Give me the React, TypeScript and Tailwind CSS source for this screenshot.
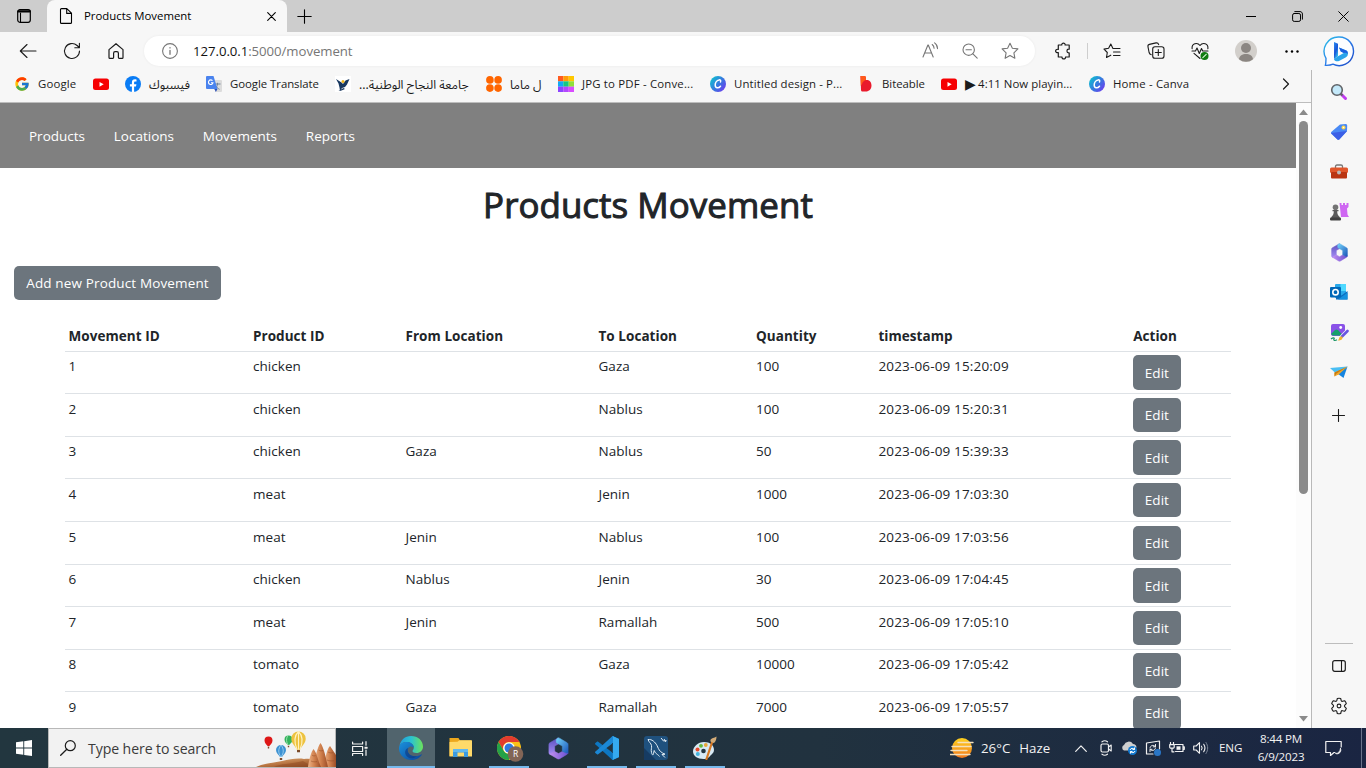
import type { ReactNode } from "react";
import { FcGoogle } from "react-icons/fc";

type IconProps = { className?: string; box?: string; children: ReactNode };

function Line({ className = "size-5", box = "0 0 20 20", children }: IconProps) {
  return (
    <svg className={className} viewBox={box} fill="none" stroke="currentColor" strokeLinecap="round" strokeLinejoin="round">
      {children}
    </svg>
  );
}

function Art({ className = "size-4", box = "0 0 16 16", children }: IconProps) {
  return (
    <svg className={className} viewBox={box}>
      {children}
    </svg>
  );
}

function Slot({ className, children }: { className: string; children?: ReactNode }) {
  return <div className={`flex h-full shrink-0 items-center justify-center ${className}`}>{children}</div>;
}

/* ---------- Title bar ---------- */

function TitleBar() {
  return (
    <div className="flex h-8 shrink-0 items-stretch bg-[#cdcdcd] text-black">
      <Slot className="w-[47px]">
        <Line className="size-4" box="0 0 16 16">
          <rect x="1.7" y="1.7" width="12.6" height="12.6" rx="2.2" strokeWidth="1.2" />
          <path d="M2.3 3.4h11.4" strokeWidth="2.2" />
          <path d="M4.5 5v9" strokeWidth="1.1" />
        </Line>
      </Slot>
      <div className="flex w-60 items-center rounded-t-lg bg-[#f7f7f7] pr-[11px] pl-3">
        <Line className="h-4 w-[14px]" box="0 0 14 16">
          <path d="M2.5 .6h5.3l4.7 4.6v9.2c0 .6-.4 1-1 1h-9c-.6 0-1-.4-1-1V1.6c0-.6.4-1 1-1zM7.7.8v4.6h4.6" strokeWidth="1.1" />
        </Line>
        <span className="ml-[11px] flex-1 text-[11.4px]">Products Movement</span>
        <Line className="size-[9px]" box="0 0 9 9">
          <path d="M.7.7l7.6 7.6M8.3.7L.7 8.3" strokeWidth="1.1" />
        </Line>
      </div>
      <Slot className="w-[35px]">
        <Line className="size-[15px]" box="0 0 15 15">
          <path d="M7.5.8v13.4M.8 7.5h13.4" strokeWidth="1.1" />
        </Line>
      </Slot>
      <div className="flex-1" />
      <Slot className="w-[46px]">
        <Line className="size-[10px]" box="0 0 10 10"><path d="M0 5.5h10" /></Line>
      </Slot>
      <Slot className="w-[46px]">
        <Line className="size-[11px]" box="0 0 11 11">
          <rect x=".6" y="2.5" width="7.9" height="7.9" rx="1.6" />
          <path d="M2.8.6h5.2c1.4 0 2.4 1 2.4 2.4v5.2" />
        </Line>
      </Slot>
      <Slot className="w-[46px]">
        <Line className="size-[11px]" box="0 0 11 11"><path d="M.7.7l9.6 9.6M10.3.7L.7 10.3" /></Line>
      </Slot>
    </div>
  );
}

/* ---------- Toolbar ---------- */

function BingLogo() {
  return (
    <svg className="h-[34px] w-[34px]" viewBox="0 0 34 34">
      <defs>
        <linearGradient id="ring" x1="0" y1="0" x2="1" y2="1">
          <stop offset="0" stopColor="#2bc3e8" />
          <stop offset=".5" stopColor="#2b7de9" />
          <stop offset="1" stopColor="#1b45c4" />
        </linearGradient>
        <linearGradient id="bee" x1="0" y1="0" x2=".6" y2="1">
          <stop offset="0" stopColor="#2b8cf0" />
          <stop offset=".6" stopColor="#1a55d8" />
          <stop offset="1" stopColor="#32c0ee" />
        </linearGradient>
      </defs>
      <path d="M17 3a14.3 14.3 0 1 1-6 27.2c-2.2 1.1-4.7 1.3-7.6 1.2.5-2.3.5-4.2.6-7A14.3 14.3 0 0 1 17 3z" fill="#fdfdff" stroke="url(#ring)" strokeWidth="1.4" />
      <path d="M12 8l4 1.7v12.6l-4 2.7z" fill="url(#bee)" />
      <path d="M12 25l4-2.8 5.8-3.3-3-1.4-1.7-4 7.3 3c1.3.6 1.5 2 1.5 3.3 0 1.8-.8 2.9-2.3 3.8L17 27c-2 .9-5-.1-5-2z" fill="#2aa4ea" />
      <path d="M17 13.5l7.2 3c1.3.6 1.7 2 1.6 3.6-1.2-1.5-2.7-1.3-4-1.2l-3-1.4z" fill="#1c5fe0" />
    </svg>
  );
}

function Toolbar() {
  return (
    <div className="flex h-[38px] shrink-0 items-center bg-[#f7f7f7] pl-[6px] text-[#1b1b1b]">
      <Slot className="w-11">
        <Line><path d="M18 10H2.5M9 3.5L2.3 10 9 16.5" strokeWidth="1.1" /></Line>
      </Slot>
      <Slot className="w-11">
        <Line><path d="M17.5 10a7.5 7.5 0 1 1-2.4-5.5L17.3 6.5M17.4 2.2v4.5h-4.6" strokeWidth="1.1" /></Line>
      </Slot>
      <Slot className="w-11">
        <Line>
          <path d="M3 8.6L10 2.7l7 5.9v7.9c0 .6-.3.9-.9.9h-2.9c-.5 0-.8-.3-.8-.8v-4.4c0-1-.7-1.6-1.5-1.6H9.1c-.9 0-1.5.7-1.5 1.6v4.4c0 .5-.3.8-.8.8H3.9c-.6 0-.9-.3-.9-.9z" strokeWidth="1.2" />
        </Line>
      </Slot>
      <div className="ml-[6px] flex h-[30px] w-[891px] items-center rounded-full bg-white pr-[5px] pl-[17px] text-[#767676] shadow-[0_0_3px_rgba(0,0,0,0.06)]">
        <Line className="size-[18px]" box="0 0 18 18">
          <circle cx="9" cy="9" r="7.4" strokeWidth="1.1" />
          <path d="M9 8.3v4M9 5.6v.3" strokeWidth="1.3" />
        </Line>
        <span className="ml-[14px] flex-1 pt-px text-[13.2px] tracking-[-0.05px]">
          <span className="text-[#111]">127.0.0.1</span>:5000/movement
        </span>
        <Slot className="w-10">
          <Line>
            <path d="M3 16L7.9 4h.4l4.9 12M4.7 12h6.7M12.2 3.5c1.2.9 1.8 2.2 1.9 3.7M14.6 1.9c1.9 1.3 2.9 3.4 2.9 5.7" strokeWidth="1.1" />
          </Line>
        </Slot>
        <Slot className="w-10">
          <Line>
            <circle cx="8.7" cy="8.7" r="5.7" strokeWidth="1.1" />
            <path d="M6 8.7h5.4M12.9 12.9l4.3 4.3" strokeWidth="1.1" />
          </Line>
        </Slot>
        <Slot className="w-10">
          <Line>
            <path d="M10 2.2l2.4 5 5.5.7-4 3.9 1 5.5-4.9-2.7-4.9 2.7 1-5.5-4-3.9 5.5-.7z" strokeWidth="1.1" />
          </Line>
        </Slot>
      </div>
      <Slot className="ml-[6px] w-11">
        <Line className="size-[18px]" box="0 0 18 18">
          <path d="M4.3 3h3.5c-.4-2.400 3.700-2.400 3.300 0h4.100v4.200h-.6c-2.200 0-2.200 3.700 0 3.700h.6V15h-3.700c.5 2.600-3.900 2.600-3.500 0H4.300v-4.400c-3.600.6-3.600-3.900 0-3.300z" strokeWidth="1.2" />
        </Line>
      </Slot>
      <div className="ml-[2px] h-4 w-px bg-[#cecece]" />
      <Slot className="ml-[2px] w-11">
        <Line>
          <path d="M10.8 7.3L8.8 3 6.6 7.3l-4.6.8 3.3 3.4-.8 5 4.3-2.3M11 7.500h7M11.500 11h6.500M11.500 14.500h6.500" strokeWidth="1.1" />
        </Line>
      </Slot>
      <Slot className="w-11">
        <Line>
          <path d="M5.300 13.700c-1.500-.2-1.900-1.100-2.200-2.200L2 5.800c-.3-1.300.3-2.100 1.400-2.400l6.600-1.500c1.400-.3 2.200.2 2.700 1.700" strokeWidth="1.1" />
          <rect x="6.7" y="5.700" width="11.3" height="11.6" rx="2.3" strokeWidth="1.1" />
          <path d="M12.300 8.500v6M9.300 11.500h6" strokeWidth="1.1" />
        </Line>
      </Slot>
      <Slot className="w-11">
        <Line>
          <path d="M2.100 7.700C1.500 2.200 7.400 1 10 4.500c2.600-3.500 8.500-2.300 7.900 3.200M2 10h3.500l1.500-3 2.300 5.500 2.200-5 1.200 2.500H18M4 12.300l6 5.200" strokeWidth="1.1" />
          <circle cx="14.5" cy="15" r="4" fill="#107c10" stroke="none" />
          <path d="M12.800 16.600l3.400-3.300" stroke="#dff6dd" strokeWidth="1.1" />
        </Line>
      </Slot>
      <Slot className="w-[47px]">
        <Art className="size-[22px]" box="0 0 22 22">
          <circle cx="11" cy="11" r="11" fill="#d2cfcb" />
          <circle cx="11" cy="8" r="5" fill="#8b8682" />
          <path d="M4 19.300c.3-7.200 13.700-7.200 14 0A11 11 0 0 1 4 19.300z" fill="#8b8682" />
        </Art>
      </Slot>
      <Slot className="w-[46px]">
        <Art className="h-[3px] w-[14px]" box="0 0 14 3">
          <circle cx="1.5" cy="1.5" r="1.2" /><circle cx="7" cy="1.5" r="1.2" /><circle cx="12.5" cy="1.5" r="1.2" />
        </Art>
      </Slot>
      <Slot className="ml-px w-[46px]"><BingLogo /></Slot>
    </div>
  );
}

/* ---------- Bookmarks ---------- */

function YouTube() {
  return (
    <Art>
      <rect y="2.5" width="16" height="11.5" rx="2.5" fill="#f60002" />
      <path d="M6.500 5.900l4.200 2.400-4.200 2.400z" fill="#fff" />
    </Art>
  );
}

function Canva({ id }: { id: string }) {
  return (
    <Art>
      <defs>
        <linearGradient id={id} x1="0" y1=".2" x2="1" y2="1">
          <stop offset="0" stopColor="#0fc0d0" /><stop offset=".5" stopColor="#3a74e0" /><stop offset="1" stopColor="#7b2ff2" />
        </linearGradient>
      </defs>
      <circle cx="8" cy="8" r="8" fill={`url(#${id})`} />
      <path d="M10.500 6c.6-1.400-.3-2.400-1.500-2.100C6.700 4.400 5.100 7 5.200 9.300c.1 3.200 3.400 3.300 5.300.9" fill="none" stroke="#fff" strokeWidth="1.5" strokeLinecap="round" />
    </Art>
  );
}

const rainbow = [
  ["#ff5a1f", "#ff9d0a", "#ffc800"],
  ["#12a8f5", "#14c784", "#8fe03a"],
  ["#8e44ff", "#b347ff", "#d94bff"],
];

const bookmarks: { width: string; label?: ReactNode; text?: string; icon: ReactNode }[] = [
  { width: "w-[79px]", label: "Google", text: "tracking-[0.15px]", icon: <FcGoogle className="size-4" /> },
  { width: "w-8", icon: <YouTube /> },
  {
    width: "w-[81px]", label: "فيسبوك",
    icon: (
      <Art>
        <circle cx="8" cy="8" r="8" fill="#0a7cf5" />
        <path d="M6.900 16v-5.500H4.900V8.200h2V6.500c0-2.200 1.100-3.300 3-3.300.7 0 1.200.1 1.600.2v2h-1.100c-1 0-1.300.5-1.300 1.300v1.500h2.300l-.4 2.300H9.100V16z" fill="#fff" />
      </Art>
    ),
  },
  {
    width: "w-[129px]", label: "Google Translate", text: "tracking-[-0.05px]",
    icon: (
      <Art>
        <path d="M6 4h9a1 1 0 0 1 1 1v10a1 1 0 0 1-1 1H9.500z" fill="#dcdcdc" />
        <path d="M8.500 8h6M11.500 6.800V8c0 2-1.500 4-3 5M9.500 9.500c1 2 2.500 3 4 3.800" fill="none" stroke="#70839a" />
        <path d="M1 0h6.500l4 13H1a1 1 0 0 1-1-1V1a1 1 0 0 1 1-1z" fill="#4a83ee" />
        <path d="M8.500 13h3L9.800 16z" fill="#2b50b8" />
        <path d="M6.500 4.700a2.300 2.300 0 1 0 .5 2H5" fill="none" stroke="#fff" strokeWidth="1.1" />
      </Art>
    ),
  },
  {
    width: "w-[151px]", label: "جامعة النجاح الوطنية...",
    icon: (
      <Art>
        <rect width="16" height="16" fill="#fff" />
        <path d="M1 3l5.500 3.500L8 8l2.500-3.500L14.500 3 12 8.500 10 11l-3 1-2 3-.5-3.500-1-4z" fill="#17375f" />
        <path d="M3.500 15l5-3 1.500 1-3.500 1.500z" fill="#17375f" />
        <circle cx="8" cy="5.600" r="1.500" fill="#eeb51b" />
      </Art>
    ),
  },
  {
    width: "w-[72px]", label: "ل ماما",
    icon: (
      <Art>
        <g fill="#ff6500">
          <circle cx="3.9" cy="3.9" r="3.8" /><circle cx="12.1" cy="3.9" r="3.8" />
          <circle cx="3.9" cy="12.1" r="3.8" /><circle cx="12.1" cy="12.1" r="3.8" />
        </g>
      </Art>
    ),
  },
  {
    width: "w-[152px]", label: "JPG to PDF - Conve...", text: "tracking-[0.18px]",
    icon: (
      <Art>
        {rainbow.map((row, y) => row.map((c, x) => <rect key={c} x={x * 5.33} y={y * 5.33} width="5.4" height="5.4" fill={c} />))}
      </Art>
    ),
  },
  { width: "w-[148px]", label: "Untitled design - P...", text: "tracking-[0.12px]", icon: <Canva id="canva1" /> },
  {
    width: "w-[83px]", label: "Biteable", text: "tracking-[-0.05px]",
    icon: (
      <Art>
        <path d="M2.500 0h4.600c.8 1 1 2.500.9 4 3.800-.5 5.500 2.400 5.500 5.500 0 3.800-2.400 6-5.700 6H4.500c-1 0-1.500-.6-1.500-1.500z" fill="#e91a2c" />
        <path d="M2.500 0h4.600c.8 1 1 2.500.9 4-2 .4-3.500 2-4 4L2.800 10z" fill="#ff5a1c" />
      </Art>
    ),
  },
  {
    width: "w-[148px]", text: "flex items-center tracking-[0.05px]", icon: <YouTube />,
    label: <><span className="mr-[2px] text-[14px] leading-4">▶</span>4:11 Now playin...</>,
  },
  { width: "w-[110px]", label: "Home - Canva", text: "tracking-[0.16px]", icon: <Canva id="canva2" /> },
];

function Bookmarks() {
  return (
    <div className="flex h-[33px] shrink-0 items-center border-b border-[#bdbdbd] bg-[#f7f7f7] pb-1 pl-[14px] text-[11.4px] text-[#1b1b1b]">
      {bookmarks.map((b, i) => (
        <div key={i} className={`flex h-5 shrink-0 items-center gap-2 whitespace-nowrap ${b.width}`}>
          <span className="shrink-0">{b.icon}</span>
          {b.label && (
            <span className={b.text ?? "pt-px font-['Noto_Sans_Arabic','DejaVu_Sans',sans-serif] text-[12.2px] leading-5"} dir={b.text ? "ltr" : "rtl"}>
              {b.label}
            </span>
          )}
        </div>
      ))}
      <Line className="ml-[83px] h-3 w-2" box="0 0 8 12"><path d="M1.5 1l5 5-5 5" strokeWidth="1.2" /></Line>
    </div>
  );
}

/* ---------- Page ---------- */

const columns = "grid grid-cols-[184.4px_152.5px_193px_157.5px_122.4px_254.8px_1fr]";
const headers = ["Movement ID", "Product ID", "From Location", "To Location", "Quantity", "timestamp", "Action"];
const rows = [
  ["1", "chicken", "", "Gaza", "100", "2023-06-09 15:20:09"],
  ["2", "chicken", "", "Nablus", "100", "2023-06-09 15:20:31"],
  ["3", "chicken", "Gaza", "Nablus", "50", "2023-06-09 15:39:33"],
  ["4", "meat", "", "Jenin", "1000", "2023-06-09 17:03:30"],
  ["5", "meat", "Jenin", "Nablus", "100", "2023-06-09 17:03:56"],
  ["6", "chicken", "Nablus", "Jenin", "30", "2023-06-09 17:04:45"],
  ["7", "meat", "Jenin", "Ramallah", "500", "2023-06-09 17:05:10"],
  ["8", "tomato", "", "Gaza", "10000", "2023-06-09 17:05:42"],
  ["9", "tomato", "Gaza", "Ramallah", "7000", "2023-06-09 17:05:57"],
];

function Page() {
  return (
    <div className="flex min-h-0 flex-1 bg-white text-[#212529]">
      <main className="flex w-[1296px] flex-col overflow-hidden text-[13.5px] tracking-[0.05px]">
        <nav className="flex h-[65px] shrink-0 items-center gap-[28.8px] bg-[#808080] pt-[2px] pl-[29px] tracking-normal text-white">
          <a>Products</a><a>Locations</a><a>Movements</a><a>Reports</a>
        </nav>
        <h1 className="mt-[14px] h-[46px] shrink-0 text-center text-[34.9px] leading-[46px] font-normal [-webkit-text-stroke:1px_#212529]">Products Movement</h1>
        <button className="mt-[38px] ml-[14px] h-[34px] w-[207px] shrink-0 rounded-[5px] bg-[#6c757d] tracking-[0.14px] text-white">Add new Product Movement</button>
        <div className="mt-[22px] ml-[65px] w-[1166px] shrink-0">
          <div className={`${columns} h-[29.55px] border-b border-[#dee2e6] font-bold`}>
            {headers.map((h) => <div key={h} className="pl-[3.6px] leading-[28px]">{h}</div>)}
          </div>
          {rows.map((r) => (
            <div key={r[0]} className={`${columns} h-[42.6px] border-b border-[#dee2e6]`}>
              {r.map((c, i) => <div key={i} className={`pt-[3.6px] pl-[3.6px] leading-[22px] ${i === 5 ? "tracking-[0.16px]" : ""}`}>{c}</div>)}
              <div className="pt-[3.6px] pl-[3.3px]">
                <button className="h-[34.4px] w-12 rounded-[5px] bg-[#6c757d] pt-[0.7px] text-white">Edit</button>
              </div>
            </div>
          ))}
        </div>
      </main>
      <div className="flex w-[15px] flex-col items-center bg-[#fcfcfc] pt-[6px] pb-[6px]">
        <svg className="h-[6px] w-[9px]" viewBox="0 0 9 6"><path d="M4.5 .5L9 6H0z" fill="#8b8b8b" /></svg>
        <div className="mt-[6px] h-[373px] w-[9px] rounded-full bg-[#8b8b8b]" />
        <div className="flex-1" />
        <svg className="h-[6px] w-[9px]" viewBox="0 0 9 6"><path d="M4.5 5.5L0 0h9z" fill="#8b8b8b" /></svg>
      </div>
    </div>
  );
}

/* ---------- Side bar ---------- */

function Hexagon({ id }: { id: string }) {
  return (
    <>
      <defs>
        <linearGradient id={`${id}a`} x1="0" y1="0" x2="0" y2="1"><stop offset="0" stopColor="#5a50bd" /><stop offset="1" stopColor="#a58cf4" /></linearGradient>
        <linearGradient id={`${id}b`} x1="0" y1="0" x2="1" y2="1"><stop offset="0" stopColor="#74d5fb" /><stop offset="1" stopColor="#1b55b8" /></linearGradient>
        <linearGradient id={`${id}c`} x1="0" y1="0" x2="1" y2="0"><stop offset="0" stopColor="#c18ff0" /><stop offset="1" stopColor="#6a50d0" /></linearGradient>
      </defs>
      <g strokeWidth=".6" strokeLinejoin="round">
        <path d="M12 .8L3 6c-.8.500-1 1-1 1.800v8.600c0 1 .5 1.600 1.300 1.900l4.700-3V9.500l6-3.500z" fill={`url(#${id}a)`} stroke={`url(#${id}a)`} />
        <path d="M3 18l7.800 4.600c.8.500 1.700.5 2.500 0L21 18c.6-.4.9-.9 1-1.500l-6-1.500-4 2.300L8 15z" fill={`url(#${id}c)`} stroke={`url(#${id}c)`} />
        <path d="M10.500 1.500c1-.7 2-.7 3 0L21 6c.7.500 1 1 1 1.800v8.700c-1 .5-2 .3-3-.2L16 14.800V9.500L10 6c-.5-1.800-.5-3.500.5-4.500z" fill={`url(#${id}b)`} stroke={`url(#${id}b)`} />
      </g>
    </>
  );
}

const apps: ReactNode[] = [
  <Art className="size-[18px]" box="0 0 18 18">
    <path d="M11.500 11.500l4 4" stroke="#c03cf0" strokeWidth="3" strokeLinecap="round" />
    <path d="M10.500 10.500l2 2" stroke="#5f5f66" strokeWidth="2" />
    <circle cx="7" cy="7" r="5.300" fill="#c4e9fa" stroke="#606468" strokeWidth="1.6" />
  </Art>,
  <Art className="size-[18px]" box="0 0 18 18">
    <path d="M10 1.500l5.500-.6c1 0 1.700.6 1.700 1.600L17 8.200l-7.500 8c-.7.700-1.600.7-2.300 0L1.500 11c-.7-.7-.7-1.600 0-2.300z" fill="#4a8af5" />
    <path d="M1 10L17 8l-7.500 8.200c-.7.700-1.600.7-2.300 0z" fill="#3c5fe6" /><circle cx="13.500" cy="4.500" r="2" fill="#ffd84b" /><circle cx="13.500" cy="4.500" r=".8" fill="#fff" />
  </Art>,
  <Art className="size-[18px]" box="0 0 18 18">
    <path d="M5.500 5V3.500c0-1 .5-1.500 1.500-1.500h4c1 0 1.500.5 1.500 1.500V5" fill="none" stroke="#777" strokeWidth="1.3" />
    <rect y="4.500" width="18" height="5.500" rx="1.500" fill="#e0562b" /><rect x="1" y="9" width="16" height="6.500" rx="1" fill="#ba3512" />
    <circle cx="9" cy="9.500" r="2" fill="#b9b9b9" />
  </Art>,
  <Art className="size-5" box="0 0 20 20">
    <path d="M10.500 1h2v2h1.500V1h2v2h1.500V1h2v4l-1.500 1.500.5 6 1.500 2.500H12z" fill="#cf68f2" />
    <circle cx="6.500" cy="5.200" r="2.800" fill="#747474" />
    <path d="M3.500 8h6v1.300H8.200c0 2.500.7 4.200 2.500 5.700v1H2.300v-1c1.800-1.500 2.500-3.200 2.500-5.700H3.500z" fill="#5b5b5b" /><rect x="1" y="15.500" width="11" height="3" rx="1" fill="#414141" />
  </Art>,
  <Art className="size-[19px]" box="0 0 24 24"><Hexagon id="sideHex" /></Art>,
  <Art className="size-[18px]" box="0 0 18 18">
    <rect x="5" y="1" width="11" height="14" rx="1" fill="#28a8ea" /><path d="M10.500 1H16v7h-5.500z" fill="#50d9ff" />
    <path d="M6 16.500V9l5.500 3.500L17.500 8v8.500z" fill="#0f6cbd" /><path d="M8 16.500l9.500-7v7z" fill="#1490df" />
    <rect y="4" width="11" height="10.500" rx="1" fill="#0068b8" /><circle cx="5.500" cy="9.200" r="2.700" fill="none" stroke="#fff" strokeWidth="1.600" />
  </Art>,
  <Art className="size-[19px]" box="0 0 19 19">
    <rect x="1" y="1" width="14" height="12" rx="2" fill="#8a52e8" /><circle cx="10.700" cy="4.500" r="1.400" fill="#fff" />
    <path d="M1 11l4-4c1-.8 2-.8 3 0l5 5.500H2.500z" fill="#16a06a" />
    <path d="M17.500 8L12 13.500" stroke="#f7f7f7" strokeWidth="4" strokeLinecap="round" />
    <path d="M17.500 8L12 13.500" stroke="#6856e0" strokeWidth="2.600" strokeLinecap="round" /><path d="M8 17.500c2 .2 5-.7 4.500-3.700-2-1-3.700.7-3.500 2z" fill="#f3b62a" />
    <path d="M1 16c2-1.700 4-1.500 3 0s1 2 3 .8" fill="none" stroke="#199565" strokeWidth="1.200" />
  </Art>,
  <Art className="size-[18px]" box="0 0 18 18">
    <path d="M0 5l17.500-1.500L6 10.500z" fill="#49bef3" /><path d="M17.500 3.500L13.500 15l-6-4.500z" fill="#1684df" />
    <path d="M17.500 3.500L4.500 9.500v4L9 11.200z" fill="#f0a72c" /><path d="M4.500 9.500L17.500 3.500 6.500 10.500 4.500 13.500z" fill="#c77b11" />
  </Art>,
];

function SideBar() {
  return (
    <aside className="flex w-[55px] shrink-0 flex-col items-center border-l border-[#b9b9b9] bg-[#f7f7f7] pt-[2px] text-[#1b1b1b]">
      {apps.map((a, i) => <div key={i} className="flex h-10 items-center justify-center">{a}</div>)}
      <div className="mt-px flex h-[45px] items-center pr-px">
        <Line className="size-[13px]" box="0 0 13 13"><path d="M6.5.5v12M.5 6.5h12" strokeWidth="1.1" /></Line>
      </div>
      <div className="flex-1" />
      <div className="h-px w-7 bg-[#bdbdbd]" />
      <div className="mt-[2px] flex h-10 items-center">
        <Line className="h-3 w-[14px]" box="0 0 14 12"><rect x=".7" y=".7" width="12.6" height="10.6" rx="2" strokeWidth="1.2" /><path d="M9.5 1v10" strokeWidth="1.1" /></Line>
      </div>
      <div className="mb-[2px] flex h-10 items-center">
        <Line className="size-[18px]" box="0 0 18 18">
          <path d="M7.300 1.500c1.100-.3 2.300-.3 3.400 0l.5 2.100c.2.600.8.900 1.400.7l2-.6c.8.900 1.400 1.900 1.700 3l-1.500 1.500c-.5.500-.5 1.100 0 1.600l1.500 1.500c-.3 1.100-.9 2.100-1.700 3l-2-.6c-.6-.2-1.200.2-1.400.7l-.5 2.100c-1.100.3-2.300.3-3.400 0l-.5-2.100c-.2-.6-.8-.9-1.400-.7l-2 .6c-.8-.9-1.400-1.900-1.700-3l1.500-1.500c.5-.5.5-1.100 0-1.600L1.700 6.700c.3-1.100.9-2.100 1.700-3l2 .6c.6.200 1.200-.2 1.400-.7z" strokeWidth="1.1" />
          <circle cx="9" cy="9" r="1.9" strokeWidth="1.1" />
        </Line>
      </div>
    </aside>
  );
}

/* ---------- Task bar ---------- */

function Balloons() {
  return (
    <Art className="-mr-px h-[38px] w-[80px] shrink-0" box="0 0 80 38">
      <defs>
        <linearGradient id="rock" x1="0" y1="0" x2="1" y2="1"><stop offset="0" stopColor="#e0ad78" /><stop offset=".5" stopColor="#b4703e" /><stop offset="1" stopColor="#7c3b18" /></linearGradient>
        <linearGradient id="cone" x1="0" y1="0" x2="1" y2="0"><stop offset="0" stopColor="#efb487" /><stop offset=".5" stopColor="#cf7f4c" /><stop offset="1" stopColor="#9c4d26" /></linearGradient>
      </defs>
      <path d="M0 38c8-4 18-4 26-6 8-2 16-3 22-2 9-1 20 2 32 4v4z" fill="url(#rock)" />
      <path d="M18 38c8-4 20-3 29-6l10 6z" fill="#8d4a22" opacity=".5" />
      <path d="M68 38c1-9 3-18 6-21l6 9v12z" fill="url(#cone)" />
      <path d="M58 38c1-9 3-19 6.500-24 4 6 5.500 16 7.500 24z" fill="url(#cone)" />
      <path d="M52 38c1-7 3-15 5.500-18 3.500 4 4.500 12 7.500 18z" fill="url(#cone)" />
      <path d="M56 26c1 1 2 1 3.500.6M62.500 21c1.500 1 3 1 4.500.5M72 23c1.500 1 3 1 5 .7M55 32c2 1 4 1 6 .6M71 31c2 1 4 1 7 .8" fill="none" stroke="#8c4522" strokeWidth=".8" opacity=".6" />
      <path d="M12.500 7.500a4 4 0 0 1 4 4c0 2.500-2 4-3.300 5.700h-1.400C10.500 15.500 8.500 14 8.500 11.500a4 4 0 0 1 4-4z" fill="#de1717" />
      <path d="M25 16a5 5 0 0 1 5 5c0 3-2.500 4.500-4 7h-2c-1.500-2.500-4-4-4-7a5 5 0 0 1 5-5z" fill="#3d92d2" />
      <path d="M25 16c-3 4-3 8 0 12M25 16c3 4 3 8 0 12" fill="none" stroke="#a8d7f3" strokeWidth=".8" />
      <path d="M32.500 6.500a4 4 0 0 1 4 4c0 2.500-2 4-3.300 5.500h-1.400c-1.300-1.500-3.300-3-3.300-5.500a4 4 0 0 1 4-4z" fill="#33b35c" />
      <path d="M31.500 7c-1.500 3-1.200 6 .5 9" fill="none" stroke="#a3e2b5" strokeWidth=".9" />
      <path d="M42.500 2.500a7.200 7.200 0 0 1 7.200 7.200c0 4.300-3.500 6.500-5.700 11h-3c-2.200-4.500-5.700-6.700-5.700-11a7.200 7.200 0 0 1 7.200-7.200z" fill="#edc23f" />
      <path d="M42.500 2.500c-5 5-4 12-1.500 18M42.500 2.500c5 5 4 12 1.500 18M42.500 2.500v18" fill="none" stroke="#fff2c0" strokeWidth="1.1" />
      <path d="M11.800 17.800h1.400v1.600h-1.400zM23.800 29h2.400v2h-2.400zM31.800 16.800h1.400v1.500h-1.400zM41 21h3v2.200h-3z" fill="#7b4b2a" />
    </Art>
  );
}

const tasks: { icon: ReactNode; bar?: string; active?: boolean }[] = [
  {
    active: true, bar: "w-12",
    icon: (
      <Art className="size-6" box="0 0 24 24">
        <defs>
          <linearGradient id="edgeTop" x1="0" y1=".5" x2="1" y2=".5"><stop offset="0" stopColor="#239dde" /><stop offset=".5" stopColor="#2bc3d0" /><stop offset="1" stopColor="#6ce35b" /></linearGradient>
          <linearGradient id="edgeLow" x1="0" y1="0" x2="1" y2="1"><stop offset="0" stopColor="#1a91dc" /><stop offset="1" stopColor="#0b459b" /></linearGradient>
        </defs>
        <path d="M.5 10C1.500 4 6 0 12 0c7 0 12 4.700 12 10.500 0 4-3 6.500-6.500 6.500-2.500 0-4-1-4-2 0-.7 1.300-1.300 1.300-3.500C14.800 8 11 6 7.500 6 4 6 1.500 8 .5 10z" fill="url(#edgeTop)" />
        <path d="M0 12c.3-4 3.500-6 7.500-6 3.500 0 7.300 2 7.300 5.500h-.4C13 10 10.500 10.300 9.300 12c-2.300 4.300 2.600 9.500 8.700 8 1.500-.3 3-1 4-1.600.6-.3 1 .1.700.6C20.700 22 16.700 24 12 24 5.500 24-.3 18.700 0 12z" fill="url(#edgeLow)" />
        <path d="M9.300 12c-2.300 4.300 2.600 9.500 8.700 8-2.500 2.500-7 3.500-10 .5-3-3-2.200-7.500 1.300-8.500z" fill="#103b83" opacity=".65" />
      </Art>
    ),
  },
  {
    icon: (
      <Art className="h-5 w-[23px]" box="0 0 23 20">
        <path d="M.5 0h9l1.500 2.500h11c.6 0 1 .4 1 1V18H.5z" fill="#eda81d" /><path d="M.5 4l8-.2L10.500 2.200H22c.6 0 1 .4 1 1V18.500H.5z" fill="#ffda6a" />
        <path d="M4 11h15v8h-4v-4.500H8.500V19H4z" fill="#3c9be0" /><path d="M4 11h15v3H4z" fill="#61b8ee" />
      </Art>
    ),
  },
  {
    bar: "w-10",
    icon: (
      <Art className="size-[27px] translate-x-px translate-y-px" box="0 0 27 27">
        <circle cx="12" cy="12" r="12" fill="#fbc116" />
        <path d="M1.600 6A12 12 0 0 1 22.400 6H12a6 6 0 0 0-5.200 9z" fill="#e33b2e" />
        <path d="M1.600 6l5.200 9A6 6 0 0 0 14 17.600L12 24A12 12 0 0 1 1.600 6z" fill="#24a148" />
        <circle cx="12" cy="12" r="5.800" fill="#fff" /><circle cx="12" cy="12" r="4.500" fill="#3078e0" />
        <circle cx="18.500" cy="18" r="7.800" fill="#826556" />
        <text x="18.500" y="21" textAnchor="middle" fontSize="8.5" fontFamily="Open Sans, sans-serif" fill="#fff">R</text>
      </Art>
    ),
  },
  { icon: <Art className="size-[23px]" box="0 0 24 24"><Hexagon id="taskHex" /></Art> },
  {
    bar: "w-10",
    icon: (
      <Art className="size-6" box="0 0 24 24">
        <path d="M17.500 0L24 3v18l-6.500 3L2.200 10 .4 8.500c-.5-.5-.5-1 0-1.500L2 5.700c.4-.3.8-.3 1.200 0L18 17z" fill="#0d77c2" />
        <path d="M17.500 24L24 21V3l-6.500-3L2.200 14 .4 15.500c-.5.500-.5 1 0 1.500L2 18.300c.4.3.8.3 1.200 0L18 7z" fill="#1b88d6" />
        <path d="M17.500 0L24 3v18l-6.500 3c.3-.3.500-.6.500-1.200V1.200c0-.6-.2-.9-.5-1.200z" fill="#35aaf0" />
      </Art>
    ),
  },
  {
    bar: "w-10",
    icon: (
      <Art className="size-6" box="0 0 24 24">
        <rect width="24" height="24" rx="3" fill="#1f517e" /><path d="M0 24V12l12 12z" fill="#163b62" />
        <path d="M4 3.500c4-.5 7 2.500 9 6 1 2 1.500 4 3.500 6 1.500 1.400 3 2 4.500 2.700l-3 .3 3 3M4 3.500c1 3 3 3.500 3.500 6s-.8 4 0 7 1.700 3 2 1l.7-3c1.800 4 3.500 3.500 5.300 6M17 2l2.500 3 3-.5M20 3l2 3" fill="none" stroke="#e5eef5" />
      </Art>
    ),
  },
  {
    bar: "w-10",
    icon: (
      <Art className="size-6" box="0 0 24 24">
        <path d="M11 6c6 0 10 3 10 8 0 3-2.200 4-3.500 5.500S15 23 10.500 23C4.500 23 0 20 0 15.500S5 6 11 6z" fill="#d7e9f4" />
        <circle cx="10.500" cy="15" r="2.300" fill="#24353f" />
        <circle cx="4.500" cy="13.500" r="2" fill="#e5492c" /><circle cx="8" cy="9.800" r="1.900" fill="#67b83b" /><circle cx="12.800" cy="9" r="1.900" fill="#e8a83a" /><circle cx="4.800" cy="18" r="2" fill="#47b6df" />
        <path d="M19.500 5L13.500 23" stroke="#d77a25" strokeWidth="2.200" strokeLinecap="round" /><path d="M17.500 5.500C17 2 20 2.500 23.500.5 23.500 4 22 7 20.500 7z" fill="#d2ab78" />
      </Art>
    ),
  },
];

function TaskBar() {
  return (
    <div className="flex h-10 shrink-0 items-stretch bg-linear-to-r from-[#22363f] via-[#21323f] via-60% to-[#1a2542] text-[#f2f2f2]">
      <Slot className="w-12">
        <Art><path d="M0 2.300l7.300-1v6.300H0zM8.200 1.200L16 0v7.600H8.200zM0 8.500h7.300v6.300L0 13.800zM8.200 8.500H16V16l-7.800-1.100z" fill="#fff" /></Art>
      </Slot>
      <div className="flex w-72 items-center border border-[#b8b8b8] bg-[#f2f2f2] pl-[11px]">
        <Line className="size-4 text-[#1b1b1b]" box="0 0 16 16"><circle cx="10.300" cy="5.700" r="5" strokeWidth="1.2" /><path d="M6.800 9.200L.7 15.300" strokeWidth="1.3" /></Line>
        <span className="ml-3 flex-1 pt-[2px] text-[14.1px] tracking-[-0.08px] text-[#3b3b3b]">Type here to search</span>
        <Balloons />
      </div>
      <Slot className="w-[51px] pr-[3px]">
        <Line className="h-[15px] w-4" box="0 0 16 15"><path d="M.6 1v2h10V1M.6 5.500h10v5H.6zM.6 14.500v-2h10v2M14 .7v3.500M14 9v5.300" strokeWidth="1.2" /><path d="M13 6h2.300v1.500H13z" fill="currentColor" strokeWidth=".5" /></Line>
      </Slot>
      <div className="flex gap-px">
        {tasks.map((t, i) => (
          <div key={i} className={`flex w-12 flex-col items-center ${t.active ? "bg-[#51646d]" : ""}`}>
            <div className="flex h-[38px] items-center pt-[2px]">{t.icon}</div>
            {t.bar && <div className={`h-[2px] bg-[#76b9ed] ${t.bar}`} />}
          </div>
        ))}
      </div>
      <div className="flex-1" />
      <Slot className="w-6">
        <Art className="h-5 w-6" box="0 0 24 20">
          <defs><linearGradient id="sun" x1="0" y1="0" x2="0" y2="1"><stop offset="0" stopColor="#ffd21f" /><stop offset="1" stopColor="#f3791e" /></linearGradient></defs>
          <circle cx="12" cy="10" r="10" fill="url(#sun)" />
          <path d="M8 4.500h15M2 8.500h15M10 8.500h11M1 12.500h16M4 16.500h8M0 16.500h20" stroke="#f5e0bb" strokeWidth="1.4" strokeLinecap="round" />
        </Art>
      </Slot>
      <div className="flex w-[94px] items-center gap-[9px] pt-px pl-[7px] text-[13.3px]"><span>26°C</span><span>Haze</span></div>
      <Slot className="w-6 pl-px"><Line className="h-[7px] w-3" box="0 0 12 7"><path d="M.7 6.300L6 .9l5.300 5.400" strokeWidth="1.2" /></Line></Slot>
      <Slot className="w-6 pl-[3px]">
        <Line className="h-4 w-3" box="0 0 12 16"><rect x="1" y="4" width="7.5" height="8" rx="1.5" strokeWidth="1.2" /><path d="M8.500 7l2.700-2v6l-2.700-2M2 1.800C3.500.7 6 .7 7.500 1.800M2 14.200c1.500 1.100 4 1.100 5.500 0" strokeWidth="1.1" /></Line>
      </Slot>
      <Slot className="w-6 pl-px">
        <Art className="h-[14px] w-4" box="0 0 16 14">
          <path d="M3 9.500A3 3 0 0 1 3 4a5 5 0 0 1 9-1c2 0 3.500 1.500 3.500 3.500l-5 3z" fill="#cfcfcf" /><circle cx="11.500" cy="9.500" r="4.500" fill="#1278ce" />
          <path d="M9 9c.5-2 3.500-2.200 4.500-.5M14 10c-.5 2-3.500 2.200-4.500.5M13.500 6.500v2h-2M9.500 12.500v-2h2" fill="none" stroke="#fff" />
        </Art>
      </Slot>
      <Slot className="w-6 pl-px">
        <Line className="size-4" box="0 0 16 16"><path d="M8 14H1.500V3L14.500 1v8" strokeWidth="1.2" /><path d="M5 8c.3-3 4-3.500 5.300-1.500M10.500 4.500v2.300H8.200M10.500 8c-.4 2.800-4 3.300-5.300 1.500M5 11.500V9.300h2" strokeWidth="1" /><circle cx="12.500" cy="12.500" r="3.500" fill="#2a76c6" stroke="none" /></Line>
      </Slot>
      <Slot className="w-6 pl-px">
        <Line className="h-3 w-4" box="0 0 16 12"><path d="M6 2.500h8v7H6.500M14.300 4.800h1v2.500h-1M1.500.5v2M4.500.5v2M.7 2.700h4.500V5c0 .7-.6 1.200-1.200 1.200H2C1.200 6.200.7 5.600.7 5zM3 6.500v3.300h2" strokeWidth="1.2" /><path d="M7.500 4.300h4v3.500h-4z" fill="currentColor" stroke="none" /></Line>
      </Slot>
      <Slot className="w-6 pl-px">
        <Line className="h-[14px] w-4" box="0 0 16 14"><path d="M.7 5h2.500L6.500 1.700v10.600L3.200 9H.7zM8.500 5.200c.8 1.100.8 2.500 0 3.600M10.700 3.300c1.600 2.300 1.600 5 0 7.400" strokeWidth="1.1" /><path d="M13 1.500c2.300 3.500 2.300 7.500 0 11" stroke="#7c8798" /></Line>
      </Slot>
      <div className="flex w-[34px] items-center pl-[7px] text-[11.6px] tracking-[-0.1px]">ENG</div>
      <div className="flex w-[70px] flex-col items-center justify-center pb-px text-[11.6px] leading-[18px] tracking-[-0.2px]"><span>8:44 PM</span><span>6/9/2023</span></div>
      <Slot className="w-[34px]">
        <Line className="h-4 w-[17px]" box="0 0 17 16"><path d="M10 12.500H9l-3.500 3v-3H.8v-11h15.400V7" strokeWidth="1.2" /><path d="M15.500 8.500c1.500 3-1.500 6.500-5 5 3 0 4.500-2 5-5z" fill="currentColor" strokeWidth=".8" /></Line>
      </Slot>
      <div className="mr-1 ml-[11px] w-px bg-[#69738a]" />
    </div>
  );
}

export default function App() {
  return (
    <div className="flex h-[768px] w-[1366px] flex-col overflow-hidden bg-[#f7f7f7] font-['Open_Sans','Noto_Sans',sans-serif] leading-normal">
      <TitleBar />
      <Toolbar />
      <div className="flex min-h-0 flex-1">
        <div className="flex w-[1311px] flex-col">
          <Bookmarks />
          <Page />
        </div>
        <SideBar />
      </div>
      <TaskBar />
    </div>
  );
}
